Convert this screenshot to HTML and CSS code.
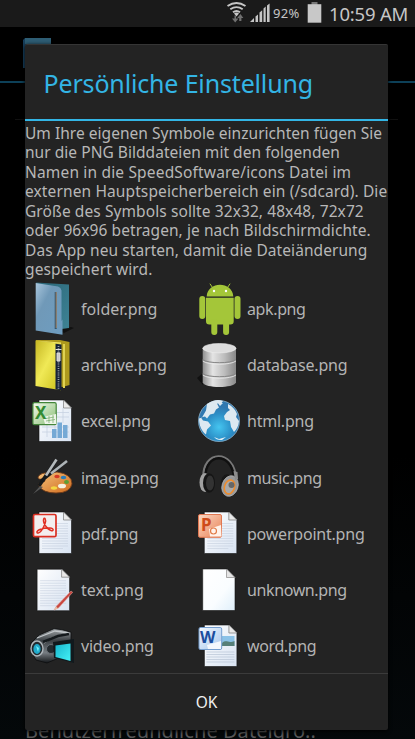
FILE: index.html
```html
<!DOCTYPE html>
<html lang="de">
<head>
<meta charset="utf-8">
<title>Persönliche Einstellung</title>
<link rel="stylesheet" href="styles.css">
</head>
<body>
<svg class="defs" width="0" height="0" aria-hidden="true">
  <defs>
    <linearGradient id="blue" x2="1" y2="1"><stop stop-color="#a9c6dc"/><stop offset=".35" stop-color="#7099b8"/><stop offset="1" stop-color="#6e9dc0"/></linearGradient>
    <linearGradient id="teal" x2="1" y2="1"><stop stop-color="#2a6577"/><stop offset="1" stop-color="#3e8395"/></linearGradient>
    <linearGradient id="gold" x2="1" y2="1"><stop stop-color="#c5b623"/><stop offset=".45" stop-color="#f0e956"/><stop offset="1" stop-color="#c9bd18"/></linearGradient>
    <linearGradient id="steel"><stop stop-color="#8f8f8f"/><stop offset=".3" stop-color="#e4e4e4"/><stop offset=".65" stop-color="#bdbdbd"/><stop offset="1" stop-color="#888"/></linearGradient>
    <linearGradient id="paper" x2="1" y2="1"><stop stop-color="#fff"/><stop offset="1" stop-color="#d8e3f2"/></linearGradient>
    <linearGradient id="blank" x2="1" y2="1"><stop stop-color="#fff"/><stop offset=".6" stop-color="#fafdff"/><stop offset="1" stop-color="#dfeffa"/></linearGradient>
    <linearGradient id="green" x2="1" y2="1"><stop stop-color="#f4faef"/><stop offset="1" stop-color="#87bd72"/></linearGradient>
    <linearGradient id="orange" x2="1" y2="1"><stop stop-color="#fbd9c4"/><stop offset="1" stop-color="#e98257"/></linearGradient>
    <linearGradient id="word" x2="1" y2="1"><stop stop-color="#f6faff"/><stop offset="1" stop-color="#a5c6ec"/></linearGradient>
    <linearGradient id="wood" x2="1" y2="1"><stop stop-color="#f5c27c"/><stop offset="1" stop-color="#cf6a1c"/></linearGradient>
    <radialGradient id="sea" cx=".5" cy=".65"><stop stop-color="#45c5f0"/><stop offset=".65" stop-color="#2b8ec6"/><stop offset="1" stop-color="#2f78b0"/></radialGradient>
    <linearGradient id="metal" x2="0" y2="1"><stop stop-color="#a2a7aa"/><stop offset=".35" stop-color="#3b4044"/><stop offset=".7" stop-color="#787e83"/><stop offset="1" stop-color="#121518"/></linearGradient>
    <linearGradient id="screen" x2="1" y2="1"><stop stop-color="#17b6ce"/><stop offset="1" stop-color="#45f2f6"/></linearGradient>
    <g id="sheet"><path d="M12 7h25l7.5 7.5v34H12z" fill="url(#paper)" stroke="#111" stroke-width=".6"/><path d="M36.500 7v8h8z" fill="#e9e9e9" stroke="#777" stroke-width=".7"/></g>
    <g id="rules" stroke="#c5cfde" stroke-width=".6"><path d="M15 18.500h26M15 21h26M15 23.500h26M15 26h26M15 28.500h26M15 31h26M15 33.500h26M15 36h26M15 38.500h26M15 41h26M15 43.500h21"/></g>
  </defs>
</svg>
<div class="phone">
  <header class="status">
    <svg class="status-icons" viewBox="0 0 46 27">
      <g fill="none" stroke="#c6c6c6" stroke-width="1.900"><path d="M.5 6q9-6 18 0M3.300 9.300q6.200-4.400 12.400 0M6 12.300q3.500-2.800 7 0"/></g>
      <path d="M7 13.500q2.500-1.800 5 0l-2.500 3z" fill="#c6c6c6"/>
      <path d="M7.500 15.500v3H5l3.200 4 3.300-4H9v-3zM12.200 21v-3h-2l3.200-4 3 4h-2v3z" fill="#707070"/>
      <path d="M23 22l4-4v4zM28.500 16.500l2.500-2V22h-2.500zM32.500 12.500l2.700-2.300V22h-2.700zM36.500 8.500l2.200-2V22h-2.200zM40 5.500l2.600-2V22H40z" fill="#c6c6c6"/>
    </svg>
    <span class="percent">92%</span>
    <svg class="battery" viewBox="0 0 15 27"><path d="M4.500 2h6v3h-6z" fill="#777"/><path d="M.7 4.200h13.600v18.500H.7z" fill="#c8c8c8"/></svg>
    <span class="clock">10:59 AM</span>
  </header>
  <main class="backdrop">
    <svg class="app-icon" viewBox="0 0 30 30"><path d="M0 2l2-2h26v30H0z" fill="#173f5c"/><path d="M2 0h26v6H2z" fill="#2e5d74"/></svg>
    <div class="tab-line"></div>
    <div class="back-rule"></div>
    <p class="back-text">Benutzerfreundliche Dateigrö..</p>
    <section class="dialog">
      <h1 class="title"><span>Persönliche Einstellung</span></h1>
      <p class="message">
        <span class="l1">Um Ihre eigenen Symbole einzurichten fügen Sie</span>
        <span class="l2">nur die PNG Bilddateien mit den folgenden</span>
        <span class="l3">Namen in die SpeedSoftware/icons Datei im</span>
        <span class="l4">externen Hauptspeicherbereich ein (/sdcard). Die</span>
        <span class="l5">Größe des Symbols sollte 32x32, 48x48, 72x72</span>
        <span class="l6">oder 96x96 betragen, je nach Bildschirmdichte.</span>
        <span class="l7">Das App neu starten, damit die Dateiänderung</span>
        <span class="l8">gespeichert wird.</span>
      </p>
      <div class="files">
        <div class="file"><svg viewBox="0 0 50 56"><path d="M33 49l11-3 3 1-10 5z" fill="#111"/><path d="M9 1.500l33 2V47l-8 1z" fill="url(#teal)"/><path d="M8.700 2L31 5.500q3 .8 3.500 4V40l1 -1.500v15.300L8.700 49.500z" fill="url(#blue)"/><path d="M28.700 11v37" stroke="#34566c" stroke-width="2"/><path d="M29.200 11v36" stroke="#c08e63" stroke-width=".8"/></svg><span class="wide">folder.png</span></div>
        <div class="file"><svg viewBox="0 0 50 56"><g fill="#a4c639"><path d="M13.700 15.600c.5-15.800 26.100-15.800 26.600 0zM13 16.700h27.700v23.500q0 3.300-3.300 3.300H16.300q-3.300 0-3.300-3.300z"/><rect x="6.300" y="15" width="6" height="23" rx="3"/><rect x="41.500" y="15" width="6" height="23" rx="3"/><rect x="18.300" y="38" width="6" height="16" rx="2.900"/><rect x="30.100" y="38" width="6" height="16" rx="2.900"/></g><path d="M19.500 6.500l-2.600-3.800M34.500 6.500l2.600-3.800" stroke="#a4c639"/><g fill="#fff"><circle cx="21" cy="10" r="1.200"/><circle cx="33" cy="10" r="1.200"/></g></svg><span class="tight">apk.png</span></div>
        <div class="file"><svg viewBox="0 0 50 56"><path d="M9 3h24l9.500 2v43l-7 2-26-3z" fill="#ad991d"/><path d="M8.500 3.500L34 7v46.300L8.500 49z" fill="url(#gold)"/><path d="M8.500 3.500L34 5.500v1.600z" fill="#eee568"/><path d="M28.500 6.800l6 .8v45.700l-6-.8z" fill="#172338"/><path d="M31.500 9v43" stroke="#9da3a6" stroke-width="1.700" stroke-dasharray="1 1.200"/><path d="M28.500 12.500h6M30 16h3v8h-3z" fill="#c9c9c9" stroke="#ddd"/><path d="M37 7v44" stroke="#dfd253" stroke-width="2"/></svg><span>archive.png</span></div>
        <div class="file"><svg viewBox="0 0 50 56"><path d="M4 41l6-5v12z" fill="#111"/><path d="M9.700 11v34.500c2 6 31 6 33.300 0V11z" fill="url(#steel)"/><ellipse cx="26.400" cy="11.200" rx="16.600" ry="4.700" fill="#ddd" stroke="#eee" stroke-width=".6"/><path d="M9.700 22.500c5 4.300 28.300 4.300 33.300 0M9.700 36.500c5 4.300 28.300 4.300 33.300 0" fill="none" stroke="#858585" stroke-width="1"/><path d="M9.700 24c5 4.300 28.300 4.300 33.300 0M9.700 38c5 4.300 28.300 4.300 33.300 0" fill="none" stroke="#ececec" stroke-width=".8"/></svg><span>database.png</span></div>
        <div class="file"><svg viewBox="0 0 50 56"><use href="#sheet"/><path d="M30 19.500h12M30 24h12M15 34h27M15 39h27M20 31v13M28 31v13M36 15v15" stroke="#c3cfdf" stroke-width=".7"/><path d="M25 36h4.500v9H25zM30.500 29.500H35V45h-4.500zM36 32h4.500v13H36z" fill="#75a9d5"/><rect x="5.900" y="9.700" width="23.300" height="22" rx="1.500" fill="url(#green)" stroke="#43853a" stroke-width="1.200"/><path d="M16 24l13-3 .500 10H18z" fill="#eef5e9"/><path d="M19 25.500l8-1.500M19 28l9-1.500M22 23v7M26 22v8" stroke="#71a964" stroke-width=".7"/><text x="8" y="25.500" class="office excel">X</text></svg><span>excel.png</span></div>
        <div class="file"><svg viewBox="0 0 50 56"><circle cx="26" cy="28" r="20.500" fill="url(#sea)" stroke="#8bb4cf" stroke-width=".8"/><path d="M14 11c6-4 11-5 16-3l-2 3-4-.5 2 4-3 2-2 4-4 1-3 4-2-2-4 1 2 3 5 1 3 4-4 4-1 5c-5-4-7-10-7-16l3-1 4-7zM24 9l6 1-3 3zM35 11c4 2 7 5 9 10l-1 3 3 4c-.500 5-2 8-5 11l-3-5-1-6-5-1-1-4 3-4 3-2-2-2z" fill="#dce9f1"/><path d="M21 44l5 2 7-2-4 3c-4 .5-6-1-8-3z" fill="#e6f1f7"/></svg><span>html.png</span></div>
        <div class="file"><svg viewBox="0 0 50 56"><path d="M11 28q3-5 12-4l7-1q15 2 15 12-2 9-16 9-13 0-17-7-2-3 4-4 4-1 0-3-5 1-5-2z" fill="url(#wood)" stroke="#6e3a18" stroke-width=".9"/><path d="M14 32L36 15" stroke="#15191b" stroke-width="3"/><path d="M24 24.500L40 12" stroke="#aeb4b7" stroke-width="2.600"/><path d="M12 37l16-24" stroke="#15191b" stroke-width="3.300"/><path d="M19 26.500l10.500-16" stroke="#b5babc" stroke-width="2.600"/><path d="M6 45l7-8 3 1z" fill="#555"/><ellipse cx="30" cy="27.500" rx="2.700" ry="1.700" fill="#d53a25"/><ellipse cx="36.500" cy="28.500" rx="2.800" ry="1.800" fill="#2b7eb9"/><ellipse cx="39.500" cy="33" rx="2.500" ry="1.900" fill="#5c9e35"/><ellipse cx="35" cy="37" rx="4" ry="2.300" fill="#f6f1df"/><ellipse cx="27" cy="39" rx="3.200" ry="1.700" fill="#f3d741"/></svg><span class="tight">image.png</span></div>
        <div class="file"><svg viewBox="0 0 50 56"><path d="M10.500 29C9 1 41-1 43 30" fill="none" stroke="#777" stroke-width="2.400"/><path d="M12.500 28C12 4 38 2 41 28" fill="none" stroke="#101010" stroke-width="2.400"/><ellipse cx="12" cy="33.500" rx="5.500" ry="9.500" fill="#a1a1a1"/><ellipse cx="16" cy="34" rx="6" ry="9.800" fill="#151515"/><ellipse cx="17" cy="34" rx="4" ry="7.500" fill="#333"/><ellipse cx="34" cy="36" rx="6.500" ry="10.800" fill="#171717"/><ellipse cx="37" cy="37" rx="8" ry="10.500" transform="rotate(18 37 37)" fill="#999" stroke="#bbb" stroke-width=".7"/><ellipse cx="36.500" cy="38" rx="5" ry="7" transform="rotate(18 36.500 38)" fill="#aaa" stroke="#ee8c2d" stroke-width="1.600"/><circle cx="38.500" cy="36" r="3" fill="#666"/><path d="M40.500 22l4 1 .500 7-3 1z" fill="#8c8c8c"/></svg><span class="tight">music.png</span></div>
        <div class="file"><svg viewBox="0 0 50 56"><use href="#sheet"/><use href="#rules"/><rect x="6.500" y="9.500" width="22.500" height="22.200" rx="1.500" fill="#f3eeee" stroke="#d92f22" stroke-width="1.700"/><path d="M10 27.500c-1-2 6-5 13-4.500 4 .3 4 3.500 1 2.500-4-1-8.500-8-7.300-11.500.8-2 2.600 0 1.500 4C16.500 24 11.500 30 10 27.500z" fill="none" stroke="#e13023" stroke-width="1.500"/></svg><span>pdf.png</span></div>
        <div class="file"><svg viewBox="0 0 50 56"><g transform="translate(-.7)"><use href="#sheet"/><use href="#rules"/></g><rect x="5.500" y="9.500" width="23" height="22.800" rx="1.500" fill="url(#orange)" stroke="#e07852"/><path d="M16 24l12-4 .500 11.500H17z" fill="#fff2ea"/><circle cx="20.500" cy="26" r="3" fill="none" stroke="#e17b47" stroke-width="1.200"/><text x="8" y="25.500" class="office power">P</text></svg><span>powerpoint.png</span></div>
        <div class="file"><svg viewBox="0 0 50 56"><g transform="translate(-1.900 .2)"><use href="#sheet"/><use href="#rules"/></g><path d="M27 48l2.500-4L44 29l1.700 1.300L31.500 46z" fill="#c84740" stroke="#e8a7a0" stroke-width=".5"/><path d="M27 48l2-3.200 2 1.400z" fill="#e5c7a9"/></svg><span class="wide">text.png</span></div>
        <div class="file"><svg viewBox="0 0 50 56"><path d="M9.700 7H34l8 8.500v33H9.700z" fill="url(#blank)" stroke="#111" stroke-width=".6"/><path d="M33.500 7v8.500H42z" fill="#e5e5e5" stroke="#888" stroke-width=".7"/></svg><span class="tight">unknown.png</span></div>
        <div class="file"><svg viewBox="0 0 50 56"><path d="M4 25l8-8 15-6.300 8 1 9 2.500v8L39 26l-5 13-14 6-11-3-5-9z" fill="url(#metal)" stroke="#0c0e0f" stroke-width=".8"/><path d="M10 20l18-7 14 2-18 5-7 5" fill="none" stroke="#c1c6c9" stroke-width="1.300"/><path d="M16 24l15-6 11-2" fill="none" stroke="#14191c" stroke-width="2.500"/><ellipse cx="10" cy="30.500" rx="6" ry="7.500" fill="#232b30" stroke="#aeb6ba" stroke-width="1.400"/><ellipse cx="10" cy="31" rx="3.600" ry="5" fill="#20a9ca"/><path d="M9 28l3 2-1 4z" fill="#6ef2f9"/><circle cx="24" cy="31" r="4.500" fill="#242a2e" stroke="#697177"/><path d="M26 24l21-3v24L27 40z" fill="#11191d"/><path d="M28.500 27.500l15-2v17.500l-15-4z" fill="url(#screen)"/></svg><span>video.png</span></div>
        <div class="file"><svg viewBox="0 0 50 56"><g transform="translate(-.6)"><use href="#sheet"/><path d="M14 34h28M14 36.500h28M14 39h28M14 41.500h28M14 44h28" stroke="#b8c4d5" stroke-width=".7"/></g><path d="M29 18h12.500v10H29z" fill="#8bc2e7"/><path d="M29 25c5-4 6 1 12.500-2v5H29z" fill="#567f78"/><rect x="6" y="9.500" width="22.700" height="22" rx="1.500" fill="url(#word)" stroke="#759ecf"/><path d="M14 27l14-4v8H15z" fill="#f4f8fd"/><text x="7" y="24.500" class="office writer">W</text></svg><span class="tight">word.png</span></div>
      </div>
      <button class="ok">OK</button>
    </section>
  </main>
</div>
</body>
</html>
```
FILE: styles.css
```css
* { box-sizing: border-box; }
body { margin: 0; background: #000; font-family: "Noto Sans", sans-serif; }
.defs { position: absolute; }
.phone { width: 415px; height: 739px; overflow: hidden; display: flex; flex-direction: column; }
.status { height: 27px; flex: none; background: #1a1a1a; display: flex; align-items: center; justify-content: flex-end; padding-right: 7px; color: #c6c6c6; }
.status-icons { width: 46px; height: 27px; }
.percent { width: 28px; font-size: 13px; line-height: 27px; letter-spacing: .3px; white-space: nowrap; }
.battery { width: 15px; height: 27px; margin: 0 7px 0 6px; }
.clock { width: 79px; font-size: 18.500px; line-height: 25px; letter-spacing: -.2px; white-space: nowrap; }
.backdrop { position: relative; flex: 1; padding: 17px 27px 0 25px; background: linear-gradient(#000 60%, #04080a); }
.app-icon { position: absolute; left: 23px; top: 11px; width: 30px; height: 30px; }
.tab-line { position: absolute; left: 0; right: 0; top: 54px; height: 2px; background: #0d4058; }
.back-rule { position: absolute; left: 15px; right: 17px; top: 92px; height: 616px; border-top: 1px solid #111; }
.back-text { position: absolute; left: 25px; top: 690px; margin: 0; font-size: 20px; line-height: 27px; letter-spacing: .05px; color: #565758; white-space: nowrap; }
.dialog { position: relative; width: 363px; height: 686px; display: flex; flex-direction: column; background: #232323; border-radius: 2px; border-top: 1px solid #353535; box-shadow: 0 1px 4px #000; }
.title { flex: none; height: 76px; margin: 0; padding: 0 0 0 18.500px; border-bottom: 2px solid #33b5e5; color: #33b5e5; font-size: 25px; line-height: 76px; font-weight: 400; letter-spacing: -.16px; white-space: nowrap; }
.message { flex: none; height: 159.500px; margin: 0; padding-top: 2.500px; color: #b7b7b7; font-size: 15.500px; line-height: 19.500px; }
.message span { display: block; white-space: nowrap; }
.l1 { letter-spacing: .03px; }
.l2 { letter-spacing: .04px; }
.l3 { letter-spacing: .17px; }
.l4 { letter-spacing: .12px; }
.l5 { letter-spacing: .09px; }
.l6 { letter-spacing: .07px; }
.l7 { letter-spacing: .07px; }
.l8 { letter-spacing: .1px; }
.files { display: grid; grid-template-columns: 166px 170px; grid-auto-rows: 56.200px; padding-left: 2px; height: 392.500px; flex: none; }
.file { display: flex; align-items: center; gap: 4px; color: #b4b4b4; font-size: 16px; }
.file svg { width: 50px; height: 56px; flex: none; }
.file span { white-space: nowrap; line-height: 22px; letter-spacing: -.22px; padding-top: 1px; }
.file .wide { letter-spacing: .03px; }
.file .tight { letter-spacing: -.38px; }
.office { font-family: "Noto Sans", sans-serif; font-weight: 700; font-size: 17px; }
.excel { fill: #348b34; }
.power { fill: #cf4b1b; }
.writer { fill: #1c4e9e; font-size: 16px; }
.ok { flex: 1; margin: 0; padding: 0; border: 0; border-top: 1px solid #3b3b3b; background: none; color: #f0f0f0; font: 15.500px "Noto Sans", sans-serif; }
```
